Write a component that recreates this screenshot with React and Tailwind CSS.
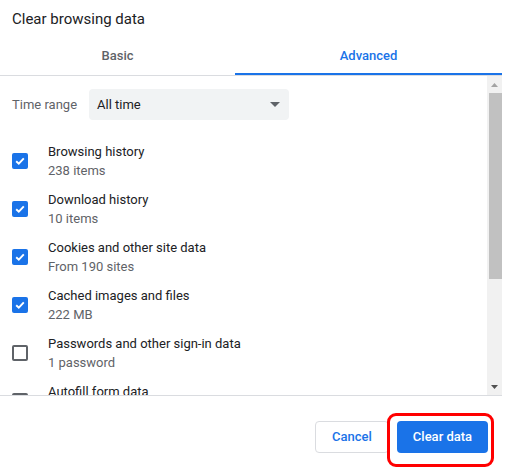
import React from 'react';

const items = [
  { title: 'Browsing history', sub: '238 items', checked: true },
  { title: 'Download history', sub: '10 items', checked: true },
  { title: 'Cookies and other site data', sub: 'From 190 sites', checked: true },
  { title: 'Cached images and files', sub: '222 MB', checked: true },
  { title: 'Passwords and other sign-in data', sub: '1 password', checked: false },
  { title: 'Autofill form data', sub: '', checked: false },
];

const Checkbox = ({ checked }) =>
  checked ? (
    <div className="w-4 h-4 rounded-[2px] bg-[#1a73e8] flex items-center justify-center shrink-0">
      <svg width="12" height="12" viewBox="0 0 12 12">
        <path d="M2.2 6.2 L4.8 8.7 L9.8 3.4" fill="none" stroke="white" strokeWidth="1.9" />
      </svg>
    </div>
  ) : (
    <div className="w-4 h-4 rounded-[2px] border-2 border-[#5f6368] shrink-0" />
  );

const App = () => {
  return (
    <div
      className="relative w-[507px] h-[475px] bg-white overflow-hidden text-[#202124]"
      style={{ fontFamily: 'Roboto, "Liberation Sans", sans-serif' }}
    >
      {/* title */}
      <div className="pl-3 pt-[9px] h-[37px] text-[15px] leading-5">Clear browsing data</div>

      {/* tabs */}
      <div className="w-[502px] flex border-b border-[#dadce0]">
        <div className="w-[235px] h-[38px] flex items-center justify-center text-[13px] font-medium text-[#5f6368]">
          Basic
        </div>
        <div className="flex-1 h-[38px] flex items-center justify-center text-[13px] font-medium text-[#1a73e8] border-b-2 border-[#1a73e8] pt-[2px]">
          Advanced
        </div>
      </div>

      {/* scroll area */}
      <div className="w-[502px] h-[320px] flex border-b border-[#dadce0]">
        <div className="flex-1 overflow-hidden">
          <div className="flex items-center pl-3 pt-[13px]">
            <span className="text-[13px] text-[#5f6368] w-[77px]">Time range</span>
            <div className="w-[200px] h-[31px] rounded bg-[#f1f3f4] flex items-center justify-between pl-2 pr-[9px] text-[13px]">
              <span>All time</span>
              <svg width="10" height="5" viewBox="0 0 10 5">
                <path d="M0 0 L10 0 L5 5 Z" fill="#5f6368" />
              </svg>
            </div>
          </div>
          <div className="pt-[17px]">
            {items.map((item) => (
              <div key={item.title} className="h-12 flex items-center pl-3">
                <Checkbox checked={item.checked} />
                <div className="ml-5 text-[13px] leading-[19px]">
                  <div>{item.title}</div>
                  <div className="text-[#5f6368]">{item.sub || '\u00a0'}</div>
                </div>
              </div>
            ))}
          </div>
        </div>

        {/* scrollbar */}
        <div className="w-[15px] bg-[#f1f1f1] flex flex-col items-center">
          <div className="h-[17px] flex items-center justify-center">
            <svg width="7" height="4" viewBox="0 0 7 4">
              <path d="M0 4 L3.5 0 L7 4 Z" fill="#a3a3a3" />
            </svg>
          </div>
          <div className="w-[13px] h-[186px] bg-[#c1c1c1] ml-[2px]" />
          <div className="flex-1" />
          <div className="h-[17px] flex items-center justify-center">
            <svg width="7" height="4" viewBox="0 0 7 4">
              <path d="M0 0 L7 0 L3.5 4 Z" fill="#505050" />
            </svg>
          </div>
        </div>
      </div>

      {/* footer */}
      <div className="w-[502px] flex justify-end gap-2 pt-[25px] pr-[14px]">
        <button className="h-8 w-[74px] rounded border border-[#dadce0] bg-white text-[13px] font-medium text-[#1a73e8]">
          Cancel
        </button>
        <button className="h-8 w-[91px] rounded bg-[#1a73e8] text-[13px] font-medium text-white">
          Clear data
        </button>
      </div>

      {/* red highlight */}
      <div className="absolute left-[387px] top-[413px] w-[107px] h-[54px] rounded-[9px] border-[3px] border-[#ff0000]" />
    </div>
  );
};

export default App;
